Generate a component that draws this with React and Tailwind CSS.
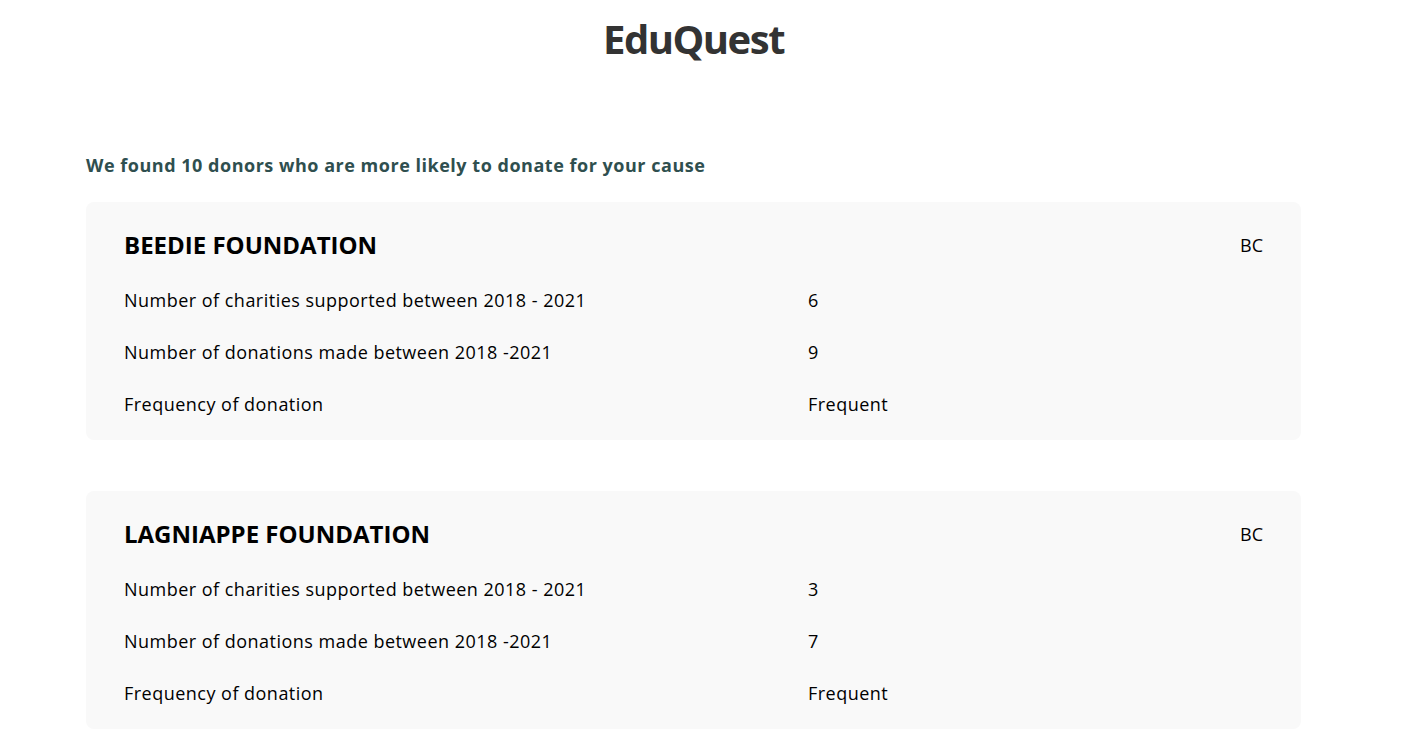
const donors = [
  { name: "BEEDIE FOUNDATION", province: "BC", charities: 6, donations: 9, frequency: "Frequent" },
  { name: "LAGNIAPPE FOUNDATION", province: "BC", charities: 3, donations: 7, frequency: "Frequent" },
];

function DonorCard({ donor }) {
  return (
    <div className="rounded-lg bg-[#f9f9f9] px-[38px] pt-[27px] pb-[22px]">
      <div className="flex items-center justify-between">
        <h2 className="text-[24px] leading-[32px] font-bold text-black">{donor.name}</h2>
        <span className="text-[18px] leading-[28px] text-black">{donor.province}</span>
      </div>
      <div className="mt-[25px] flex flex-col gap-[24px] text-[18px] leading-[28px] tracking-[0.48px] text-black">
        <div className="grid grid-cols-[684px_1fr]">
          <span>Number of charities supported between 2018 - 2021</span>
          <span>{donor.charities}</span>
        </div>
        <div className="grid grid-cols-[684px_1fr]">
          <span>Number of donations made between 2018 -2021</span>
          <span>{donor.donations}</span>
        </div>
        <div className="grid grid-cols-[684px_1fr]">
          <span>Frequency of donation</span>
          <span>{donor.frequency}</span>
        </div>
      </div>
    </div>
  );
}

export default function App() {
  return (
    <div className="min-h-screen bg-white font-['Segoe_UI','Open_Sans',sans-serif]">
      <div className="ml-[86px] w-[1215px] pt-[15px]">
        <h1 className="text-center text-[40px] leading-[48px] font-bold tracking-[-1.5px] text-[#333333]">EduQuest</h1>
        <p className="mt-[88px] text-[18px] leading-[28px] font-bold tracking-[0.52px] text-[#2f4f4f]">
          We found 10 donors who are more likely to donate for your cause
        </p>
        <div className="mt-[23px] flex flex-col gap-[51px]">
          {donors.map((d) => (
            <DonorCard key={d.name} donor={d} />
          ))}
        </div>
      </div>
    </div>
  );
}
